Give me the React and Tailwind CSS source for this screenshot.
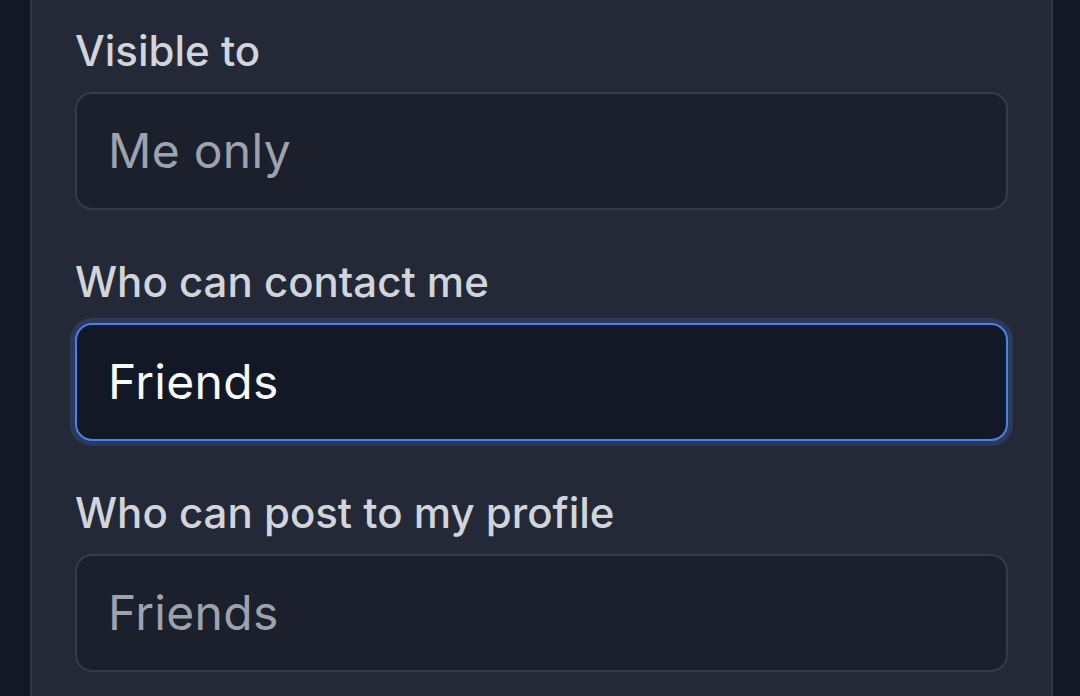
import React from "react";

const font = { fontFamily: "Inter, 'Noto Sans', sans-serif" };

function Field({ label, value, focused }) {
  return (
    <div className="flex flex-col">
      <div className="text-[42px] leading-[52px] font-medium text-[#d1d5db]">{label}</div>
      <div
        className={
          focused
            ? "mt-[15px] h-[118px] rounded-[17px] border-2 border-[#4a80e8] bg-[#131826] ring-[5px] ring-[#2a3a5a] flex items-center pl-[31px] text-[48px] tracking-[0.3px] text-[#f9fafb]"
            : "mt-[15px] h-[118px] rounded-[17px] border-2 border-[#353b48] bg-[#1b202c] flex items-center pl-[31px] text-[48px] tracking-[0.3px] text-[#9ca3af]"
        }
      >
        {value}
      </div>
    </div>
  );
}

export default function App() {
  return (
    <div className="w-[1080px] h-[696px] bg-[#121826] overflow-hidden" style={font}>
      <div className="ml-[30px] w-[1023px] h-[696px] bg-[#232936] border-x-2 border-[#2f3542] px-[43px] pt-[25px] flex flex-col gap-[46px]">
        <Field label="Visible to" value="Me only" />
        <Field label="Who can contact me" value="Friends" focused />
        <Field label="Who can post to my profile" value="Friends" />
      </div>
    </div>
  );
}
